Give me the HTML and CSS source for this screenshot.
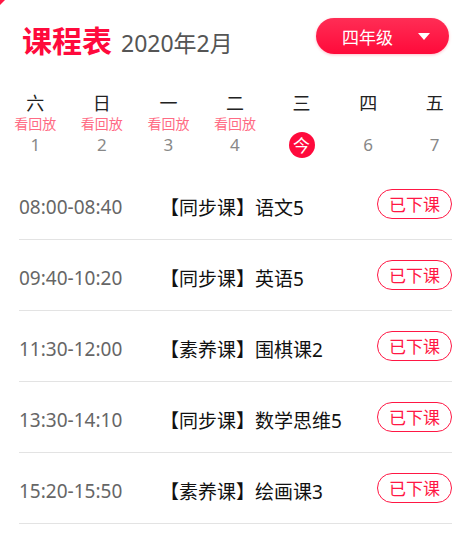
FILE: index.html
```html
<!DOCTYPE html>
<html lang="zh-CN">

<head>
    <meta charset="UTF-8">
    <meta name="viewport" content="width=device-width, initial-scale=1.0">
    <title>课程表</title>
    <link rel="stylesheet" href="styles.css">
</head>

<body>
    <span class="corner"></span>

    <header>
        <div class="title">
            <h1>课程表</h1>
            <span class="month">2020年2月</span>
        </div>
        <button class="grade-btn">四年级 <span class="arrow"></span></button>
    </header>

    <!-- week strip -->
    <div class="week">
        <div class="day">
            <span class="weekday">六</span>
            <span class="replay">看回放</span>
            <span class="date">1</span>
        </div>
        <div class="day">
            <span class="weekday">日</span>
            <span class="replay">看回放</span>
            <span class="date">2</span>
        </div>
        <div class="day">
            <span class="weekday">一</span>
            <span class="replay">看回放</span>
            <span class="date">3</span>
        </div>
        <div class="day">
            <span class="weekday">二</span>
            <span class="replay">看回放</span>
            <span class="date">4</span>
        </div>
        <div class="day">
            <span class="weekday">三</span>
            <span class="replay"></span>
            <span class="date today">今</span>
        </div>
        <div class="day">
            <span class="weekday">四</span>
            <span class="replay"></span>
            <span class="date">6</span>
        </div>
        <div class="day">
            <span class="weekday">五</span>
            <span class="replay"></span>
            <span class="date">7</span>
        </div>
    </div>

    <!-- lessons -->
    <ul class="lessons">
        <li class="lesson">
            <span class="time">08:00-08:40</span>
            <span class="name">【同步课】语文5</span>
            <span class="status">已下课</span>
        </li>
        <li class="lesson">
            <span class="time">09:40-10:20</span>
            <span class="name">【同步课】英语5</span>
            <span class="status">已下课</span>
        </li>
        <li class="lesson">
            <span class="time">11:30-12:00</span>
            <span class="name">【素养课】围棋课2</span>
            <span class="status">已下课</span>
        </li>
        <li class="lesson">
            <span class="time">13:30-14:10</span>
            <span class="name">【同步课】数学思维5</span>
            <span class="status">已下课</span>
        </li>
        <li class="lesson">
            <span class="time">15:20-15:50</span>
            <span class="name">【素养课】绘画课3</span>
            <span class="status">已下课</span>
        </li>
    </ul>
</body>

</html>
```

FILE: styles.css
```css
body {
    font-family: "Noto Sans", "Noto Sans CJK SC", sans-serif;
    margin: 0;
    padding: 0;
    background-color: #fff;
    color: #222;
}

.corner {
    position: absolute;
    top: 0;
    left: 0;
    border-top: 5px solid #ff1744;
    border-right: 5px solid transparent;
}

header {
    display: flex;
    align-items: center;
    justify-content: space-between;
    padding: 18px 19px 0 22px;
    height: 36px;
}

.title {
    display: flex;
    align-items: baseline;
    margin-top: 9px;
}

.title h1 {
    margin: 0;
    font-size: 30px;
    font-weight: bold;
    color: #ff0a3c;
    line-height: 36px;
}

.month {
    margin-left: 9px;
    font-size: 23px;
    color: #555;
}

.grade-btn {
    display: flex;
    align-items: center;
    width: 133px;
    height: 36px;
    padding: 0 0 0 26px;
    border: none;
    border-radius: 18px;
    background: linear-gradient(#ff2d55, #ff0a3a);
    color: #fff;
    font-family: "Noto Sans CJK SC", sans-serif;
    font-size: 17px;
    box-shadow: 0 1px 3px rgba(255, 0, 50, 0.25);
}

.arrow {
    margin-left: 25px;
    border-top: 7px solid #fff;
    border-left: 6px solid transparent;
    border-right: 6px solid transparent;
}

.week {
    display: grid;
    grid-template-columns: repeat(7, 1fr);
    padding: 0 0 0 2px;
    margin-top: 36px;
}

.day {
    display: flex;
    flex-direction: column;
    align-items: center;
}

.weekday {
    font-family: "Noto Sans CJK SC", sans-serif;
    font-size: 18px;
    line-height: 24px;
    color: #222;
}

.replay {
    font-family: "Noto Sans CJK SC", sans-serif;
    font-size: 14px;
    line-height: 18px;
    height: 18px;
    color: #ff6b84;
}

.date {
    width: 26px;
    height: 26px;
    line-height: 26px;
    text-align: center;
    font-size: 17px;
    color: #888;
}

.date.today {
    border-radius: 50%;
    background-color: #ff0a3c;
    color: #fff;
    font-family: "Noto Sans CJK SC", sans-serif;
    font-size: 17px;
}

.lessons {
    list-style: none;
    margin: 11px 16px 0 19px;
    padding: 0;
}

.lesson {
    display: flex;
    align-items: center;
    height: 70px;
    border-bottom: 1px solid #e3e3e3;
}

.time {
    width: 141px;
    margin-top: 5px;
    font-size: 19px;
    color: #666;
}

.name {
    flex: 1;
    margin-top: 5px;
    font-size: 19px;
    color: #111;
}

.status {
    width: 73px;
    height: 28px;
    line-height: 28px;
    text-align: center;
    border: 1px solid #ff1744;
    border-radius: 15px;
    color: #ff1744;
    font-family: "Noto Sans CJK SC", sans-serif;
    font-size: 17px;
}
```
